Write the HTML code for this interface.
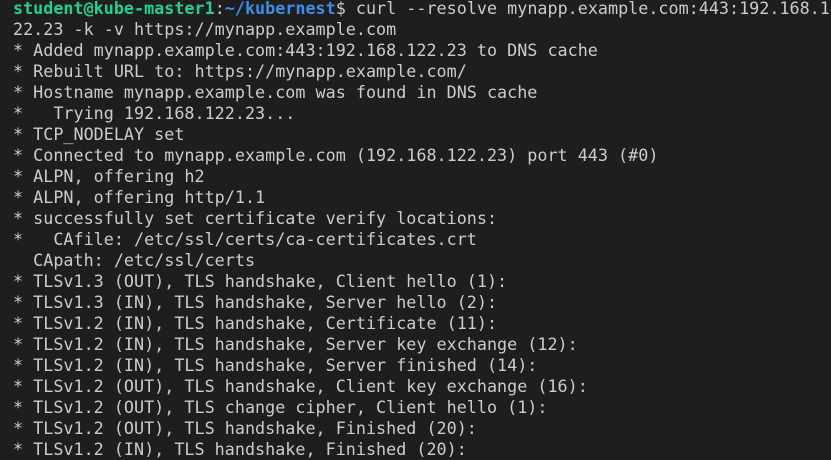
<!DOCTYPE html>
<html><head><style>
html,body{margin:0;padding:0;background:#1e1e1e;width:831px;height:458px;overflow:hidden}
pre{margin:0;position:absolute;left:13px;top:-2px;font-family:"DejaVu Sans Mono","Liberation Mono",monospace;font-size:16.75px;line-height:21px;color:#cccccc;white-space:pre}
.g{color:#23d18b;font-weight:bold}.b{color:#3b8eea;font-weight:bold}
</style></head><body><pre><span class="g">student@kube-master1</span>:<span class="b">~/kubernest</span>$ curl --resolve mynapp.example.com:443:192.168.1
22.23 -k -v https://mynapp.example.com
* Added mynapp.example.com:443:192.168.122.23 to DNS cache
* Rebuilt URL to: https://mynapp.example.com/
* Hostname mynapp.example.com was found in DNS cache
*   Trying 192.168.122.23...
* TCP_NODELAY set
* Connected to mynapp.example.com (192.168.122.23) port 443 (#0)
* ALPN, offering h2
* ALPN, offering http/1.1
* successfully set certificate verify locations:
*   CAfile: /etc/ssl/certs/ca-certificates.crt
  CApath: /etc/ssl/certs
* TLSv1.3 (OUT), TLS handshake, Client hello (1):
* TLSv1.3 (IN), TLS handshake, Server hello (2):
* TLSv1.2 (IN), TLS handshake, Certificate (11):
* TLSv1.2 (IN), TLS handshake, Server key exchange (12):
* TLSv1.2 (IN), TLS handshake, Server finished (14):
* TLSv1.2 (OUT), TLS handshake, Client key exchange (16):
* TLSv1.2 (OUT), TLS change cipher, Client hello (1):
* TLSv1.2 (OUT), TLS handshake, Finished (20):
* TLSv1.2 (IN), TLS handshake, Finished (20):</pre></body></html>
